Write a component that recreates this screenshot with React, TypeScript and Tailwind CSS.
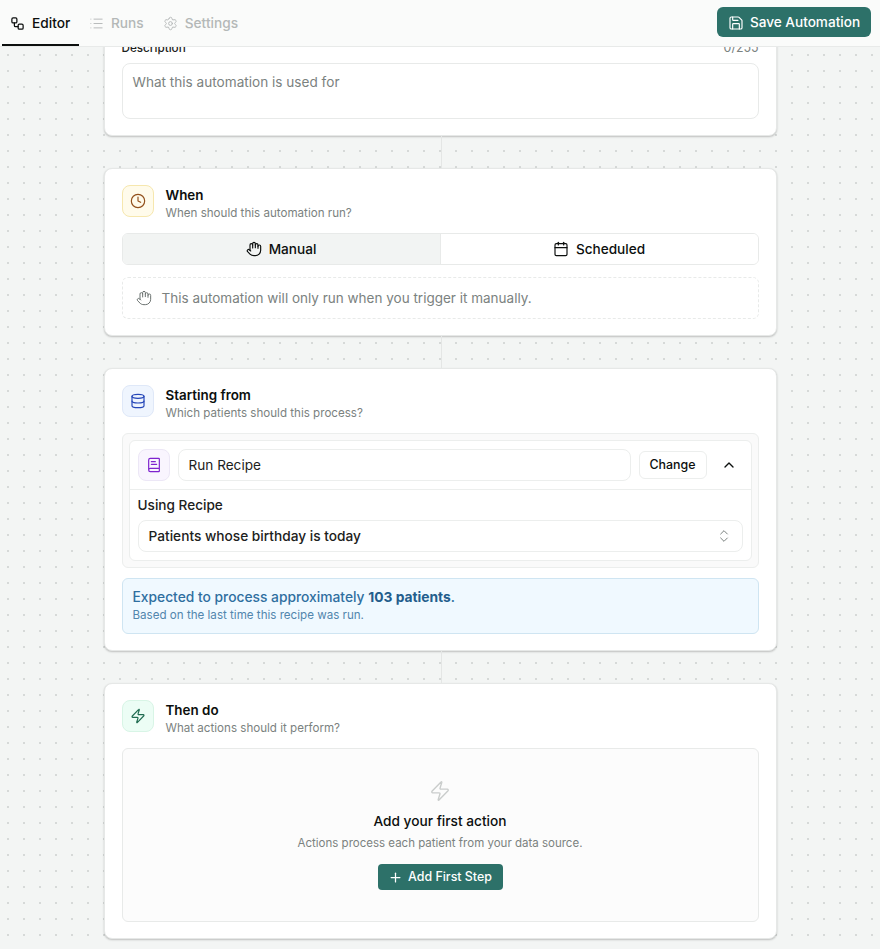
import { BookText, Calendar, ChevronUp, ChevronsUpDown, Clock, Database, Hand, List, Plus, Save, Settings, Workflow, Zap } from 'lucide-react';
import type { ReactNode } from 'react';

function StepHeader({ icon, iconBox, title, subtitle }: { icon: ReactNode; iconBox: string; title: string; subtitle: string }) {
  return (
    <div className="flex h-8 items-start gap-3">
      <div className={`flex h-8 w-8 items-center justify-center rounded-lg border ${iconBox}`}>{icon}</div>
      <div>
        <div className="text-[13.4px] leading-[20px] font-semibold text-[#0c0f0e]">{title}</div>
        <div className="text-[11.6px] leading-[16px] text-[#7b8280]">{subtitle}</div>
      </div>
    </div>
  );
}

function Card({ children }: { children: ReactNode }) {
  return (
    <div className="w-[673px] rounded-lg border border-[#e6e8e7] bg-white px-[17px] py-4 shadow-[0_1px_2px_rgba(0,0,0,0.22)]">
      {children}
    </div>
  );
}

function Connector() {
  return <div className="mx-auto h-8 w-px translate-x-[1px] bg-[#e4e6e5]" />;
}

export default function App() {
  return (
    <div className="flex h-[949px] flex-col overflow-hidden bg-[#f3f5f4] font-['Inter',sans-serif]">
      {/* Tabs */}
      <div className="flex h-[47px] shrink-0 items-start justify-between border-b border-[#e8eae9] bg-[#fafbfa] pl-[2px] pr-[9px]">
        <div className="flex h-[46px] items-start text-[13.7px] font-medium">
          <div className="flex h-[46px] w-[77px] items-center gap-[7px] border-b-2 border-[#0c0f0e] pt-[2px] pl-[8px] text-[#0c0f0e]">
            <Workflow size={15} strokeWidth={2} />
            Editor
          </div>
          <div className="ml-[10px] flex h-[46px] items-center gap-[7px] text-[#b4b8b7]">
            <List size={15} strokeWidth={1.5} />
            Runs
          </div>
          <div className="ml-[19px] flex h-[46px] items-center gap-[7px] text-[#b4b8b7]">
            <Settings size={15} strokeWidth={1.5} />
            Settings
          </div>
        </div>
        <button className="mt-[7px] flex h-[30px] w-[154px] items-center justify-center gap-[6px] rounded-md bg-[#2d7169] pt-[1px] text-[13.6px] font-medium text-white">
          <Save size={16} strokeWidth={1.75} />
          Save Automation
        </button>
      </div>

      {/* Canvas */}
      <div className="flex-1 overflow-hidden bg-[radial-gradient(#d6d9d8_0.8px,transparent_1px)] bg-[size:16px_16px]">
        <div className="-mt-6 flex flex-col items-center">
          <Card>
            <div className="flex items-center justify-between leading-[16px]">
              <span className="text-[11.7px] font-medium text-[#1c2120]">Description</span>
              <span className="text-[12.4px] text-[#7b8280]">0/255</span>
            </div>
            <div className="mt-[7px] h-14 rounded-lg border border-[#e8eae9] bg-white px-[10px] py-[9px] text-[13.6px] leading-[18px] text-[#7b8280]">
              What this automation is used for
            </div>
          </Card>
          <Connector />

          <Card>
            <StepHeader
              icon={<Clock size={16} className="text-[#92501c]" strokeWidth={1.75} />}
              iconBox="border-[#f6e7ae] bg-[#fffbeb]"
              title="When"
              subtitle="When should this automation run?"
            />
            <div className="mt-4 flex h-8 overflow-hidden rounded-md border border-[#e8eae9] text-[13.6px] font-medium text-[#0c0f0e]">
              <div className="flex flex-1 items-center justify-center gap-[7px] border-r border-[#e8eae9] bg-[#f2f4f3]">
                <Hand size={16} strokeWidth={1.75} />
                Manual
              </div>
              <div className="flex flex-1 items-center justify-center gap-[7px] bg-white">
                <Calendar size={16} strokeWidth={1.75} />
                Scheduled
              </div>
            </div>
            <div className="mt-3 flex h-[42px] items-center gap-[10px] rounded-md border border-dashed border-[#e8eae9] px-[13px] text-[13.5px] text-[#7b8280]">
              <Hand size={16} strokeWidth={1.5} className="text-[#6b7270]" />
              This automation will only run when you trigger it manually.
            </div>
          </Card>
          <Connector />

          <Card>
            <StepHeader
              icon={<Database size={16} className="text-[#2546b8]" strokeWidth={1.75} />}
              iconBox="border-[#dfe8f8] bg-[#eff5fe]"
              title="Starting from"
              subtitle="Which patients should this process?"
            />
            <div className="mt-4 rounded-md border border-[#eceeed] bg-[#fafafa] p-[6px]">
              <div className="rounded-md border border-[#eceeed] bg-white">
                <div className="flex h-[49px] items-center gap-2 border-b border-[#eceeed] px-2">
                  <div className="flex h-8 w-8 items-center justify-center rounded-lg border border-[#ece7f6] bg-[#f9f5fe]">
                    <BookText size={16} strokeWidth={1.75} className="text-[#7e22ce]" />
                  </div>
                  <div className="flex h-8 flex-1 items-center rounded-lg border border-[#eceeed] px-[10px] text-[13.6px] text-[#1c2120]">
                    Run Recipe
                  </div>
                  <div className="flex h-7 w-[68px] items-center justify-center rounded-md border border-[#eceeed] pt-[1px] text-[12.4px] font-medium text-[#0c0f0e]">
                    Change
                  </div>
                  <div className="flex h-7 w-7 items-center justify-center text-[#0c0f0e]">
                    <ChevronUp size={16} strokeWidth={2} />
                  </div>
                </div>
                <div className="px-2 pt-[6px] pb-2">
                  <div className="text-[13.6px] leading-[18px] font-medium text-[#1c2120]">Using Recipe</div>
                  <div className="mt-[6px] flex h-8 items-center justify-between rounded-lg border border-[#eceeed] px-[10px] text-[13.7px] font-medium text-[#1c2120]">
                    Patients whose birthday is today
                    <ChevronsUpDown size={16} strokeWidth={1.5} className="text-[#7b8280]" />
                  </div>
                </div>
              </div>
            </div>
            <div className="mt-[10px] h-[56px] rounded-md border border-[#cfe5f2] bg-[#f0f9ff] px-[10px] pt-[8px]">
              <div className="text-[13.8px] leading-[20px] font-medium text-[#2f6f9f]">
                Expected to process approximately <span className="font-bold text-[#235d8c]">103 patients</span>.
              </div>
              <div className="text-[11.6px] leading-[16px] text-[#5286ad]">Based on the last time this recipe was run.</div>
            </div>
          </Card>
          <Connector />

          <Card>
            <StepHeader
              icon={<Zap size={16} className="text-[#1f6b50]" strokeWidth={1.75} />}
              iconBox="border-[#d8f5e6] bg-[#ecfdf5]"
              title="Then do"
              subtitle="What actions should it perform?"
            />
            <div className="mt-4 flex h-[174px] flex-col items-center rounded-md border border-[#e8eae9] bg-[#fcfcfc] pt-[31px]">
              <Zap size={22} strokeWidth={1.5} className="text-[#c9cccb]" />
              <div className="mt-[9px] text-[13.7px] leading-[20px] font-medium text-[#0c0f0e]">Add your first action</div>
              <div className="mt-1 text-[11.5px] leading-[16px] text-[#7b8280]">Actions process each patient from your data source.</div>
              <button className="mt-[13px] flex h-[26px] w-[125px] items-center justify-center gap-[5px] rounded-[4px] bg-[#2d7169] pt-[1px] text-[12.4px] font-medium text-white">
                <Plus size={15} strokeWidth={2} />
                Add First Step
              </button>
            </div>
          </Card>
        </div>
      </div>
    </div>
  );
}
